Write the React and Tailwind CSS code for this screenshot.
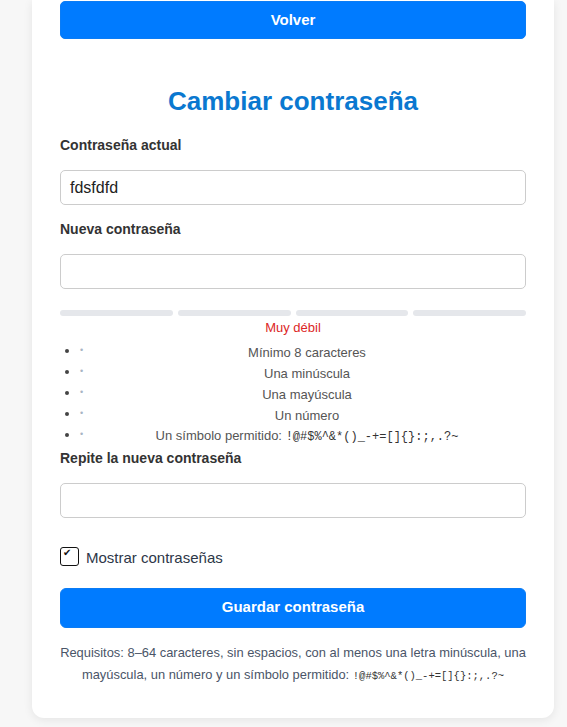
export default function App() {
  const sym = "!@#$%^&*()_-+=[]{}:;,.?~";
  const items = [
    "Mínimo 8 caracteres",
    "Una minúscula",
    "Una mayúscula",
    "Un número",
  ];
  return (
    <div className="min-h-[727px] bg-[#f7f7f7] font-['Liberation_Sans',Arial,sans-serif]">
      <div className="mx-[32px] w-[522px] rounded-b-[12px] bg-white px-[28px] pt-px pb-[31px] shadow-[0_2px_10px_rgba(0,0,0,0.08)]">
        <button className="h-[38px] w-full rounded-[5px] border border-[#0b7cf5] bg-[#007bff] text-[15px] font-bold text-white">
          Volver
        </button>
        <h1 className="mt-[46px] text-center text-[26px] leading-[32px] font-bold text-[#0a78d0]">
          Cambiar contraseña
        </h1>
        <label className="mt-[19px] block text-[14px] leading-[18px] font-bold text-[#333]">
          Contraseña actual
        </label>
        <div className="mt-[16px] flex h-[35px] items-center rounded-[5px] border border-[#ccc] px-[9px] text-[16px] text-[#222]">
          fdsfdfd
        </div>
        <label className="mt-[15px] block text-[14px] leading-[18px] font-bold text-[#333]">
          Nueva contraseña
        </label>
        <div className="mt-[16px] h-[35px] rounded-[5px] border border-[#ccc]"></div>
        <div className="mt-[21px] grid grid-cols-4 gap-[5px]">
          <div className="h-[6px] rounded-full bg-[#e5e7eb]"></div>
          <div className="h-[6px] rounded-full bg-[#e5e7eb]"></div>
          <div className="h-[6px] rounded-full bg-[#e5e7eb]"></div>
          <div className="h-[6px] rounded-full bg-[#e5e7eb]"></div>
        </div>
        <div className="mt-[3px] text-center text-[13px] leading-[18px] text-[#dc2626]">
          Muy débil
        </div>
        <ul className="mt-[3px] list-disc pl-[20px] text-[13px] leading-[21px] text-[#555] marker:text-[#444]">
          {items.map((t) => (
            <li key={t} className="h-[21px]">
              <div className="flex h-[21px] items-center">
                <span className="w-[8px] -translate-y-[2px] text-[9px] text-[#a8b4c4]">•</span>
                <span className="flex-1 text-center">{t}</span>
              </div>
            </li>
          ))}
          <li className="h-[21px]">
            <div className="flex h-[21px] items-center">
              <span className="w-[8px] -translate-y-[2px] text-[9px] text-[#a8b4c4]">•</span>
              <span className="flex-1 text-center">
                Un símbolo permitido:{" "}
                <span className="font-['Liberation_Mono',monospace] text-[12px] text-[#333]">{sym}</span>
              </span>
            </div>
          </li>
        </ul>
        <label className="mt-[4px] block text-[14px] leading-[18px] font-bold text-[#333]">
          Repite la nueva contraseña
        </label>
        <div className="mt-[16px] h-[35px] rounded-[5px] border border-[#ccc]"></div>
        <div className="mt-[27px] flex items-center gap-[7px]">
          <span className="relative block h-[19px] w-[19px] rounded-[3px] border-[1.5px] border-[#111]">
            <span className="absolute top-[-2px] left-[2px] font-['DejaVu_Sans',sans-serif] text-[10px] leading-[14px] font-bold text-[#111]">✔</span>
          </span>
          <span className="translate-y-[2px] text-[15px] text-[#2d3748]">Mostrar contraseñas</span>
        </div>
        <button className="mt-[20px] h-[40px] w-full rounded-[6px] border border-[#0b7cf5] bg-[#007bff] text-[15px] font-bold text-white">
          Guardar contraseña
        </button>
        <p className="-mx-[4px] mt-[14px] text-center text-[12.9px] leading-[22px] text-[#4a5568]">
          Requisitos: 8–64 caracteres, sin espacios, con al menos una letra minúscula, una mayúscula, un número y un símbolo permitido:{" "}
          <span className="font-['Liberation_Mono',monospace] text-[10.5px] text-[#333]">{sym}</span>
        </p>
      </div>
    </div>
  );
}
